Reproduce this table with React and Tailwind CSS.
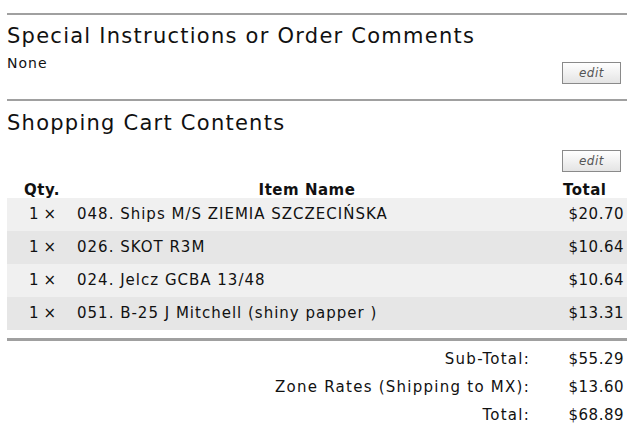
import React from 'react'

const items = [
  { qty: 1, name: '048. Ships M/S ZIEMIA SZCZECIŃSKA', total: '$20.70' },
  { qty: 1, name: '026. SKOT R3M', total: '$10.64' },
  { qty: 1, name: '024. Jelcz GCBA 13/48', total: '$10.64' },
  { qty: 1, name: '051. B-25 J Mitchell (shiny papper )', total: '$13.31' },
]

const totals = [
  { label: 'Sub-Total:', value: '$55.29' },
  { label: 'Zone Rates (Shipping to MX):', value: '$13.60' },
  { label: 'Total:', value: '$68.89' },
]

const EditButton = () => (
  <button className="w-[59px] h-[22px] border border-[#8a8a8a] bg-gradient-to-b from-white to-[#e4e4e4] text-[12px] italic text-[#555] leading-none tracking-[0.5px]">
    edit
  </button>
)

const App = () => {
  return (
    <div className="w-[640px] h-[445px] bg-white text-[#111] overflow-hidden" style={{ fontFamily: '"DejaVu Sans", Verdana, sans-serif' }}>
      <div className="ml-[7px] w-[620px] pt-[13px]">
        <div className="border-t-2 border-[#a0a0a0]" />
        <h2 className="text-[21px] leading-none mt-[11px] tracking-[1.25px]">Special Instructions or Order Comments</h2>
        <div className="flex justify-between items-start">
          <p className="text-[14px] tracking-[1px] mt-[6px]">None</p>
          <div className="mt-[13px] mr-[6px]"><EditButton /></div>
        </div>
        <div className="border-t-2 border-[#a0a0a0] mt-[15px]" />
        <h2 className="text-[21px] leading-none mt-[12px] tracking-[1.25px]">Shopping Cart Contents</h2>
        <div className="flex justify-end mt-[16px] mr-[6px]"><EditButton /></div>

        <table className="w-full border-collapse text-[15px] tracking-[1px]">
          <thead>
            <tr className="font-bold text-[15px] tracking-[0.5px] leading-[16px]">
              <th className="w-[70px] text-center h-[26px] align-bottom p-0">Qty.</th>
              <th className="text-center align-bottom p-0 pr-[26px]">Item Name</th>
              <th className="w-[64px] text-left align-bottom p-0">Total</th>
            </tr>
          </thead>
          <tbody>
            {items.map((it, i) => (
              <tr key={i} className={i % 2 === 0 ? 'bg-[#f0f0f0] h-[33px]' : 'bg-[#e6e6e6] h-[33px]'}>
                <td className="text-right pr-[21px] whitespace-nowrap tracking-normal">{it.qty} ×</td>
                <td className="whitespace-nowrap">{it.name}</td>
                <td className="text-right pr-[3px] tracking-[0.5px]">{it.total}</td>
              </tr>
            ))}
          </tbody>
        </table>

        <div className="border-t-[3px] border-[#a0a0a0] mt-[8px]" />
        <div className="mt-[4px] flex flex-col text-[15px]">
          {totals.map((t) => (
            <div key={t.label} className="flex justify-end h-[28px] items-center">
              <span className="text-right tracking-[1.25px]">{t.label}</span>
              <span className="w-[97px] text-right pr-[3px] tracking-[0.5px]">{t.value}</span>
            </div>
          ))}
        </div>
      </div>
    </div>
  )
}

export default App
